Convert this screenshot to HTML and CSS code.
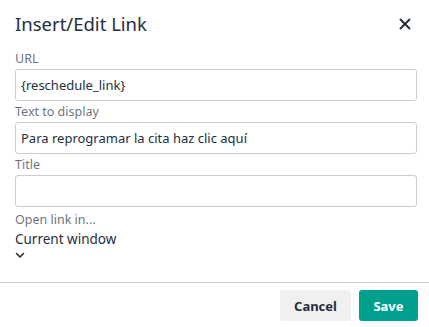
FILE: index.html
```html
<!DOCTYPE html>
<html lang="en">
<head>
    <meta charset="UTF-8">
    <title>Insert/Edit Link</title>
    <link rel="stylesheet" href="styles.css">
</head>
<body>
    <div class="dialog">
        <div class="dialog-header">
            <div class="dialog-title">Insert/Edit Link</div>
            <button class="close-btn" aria-label="Close">
                <svg width="12" height="12" viewBox="0 0 12 12">
                    <path d="M1.5 1.5 L10.5 10.5 M10.5 1.5 L1.5 10.5" stroke="#222f3e" stroke-width="2" stroke-linecap="round"/>
                </svg>
            </button>
        </div>
        <div class="dialog-body">
            <label class="field-label" for="url">URL</label>
            <input class="field-input" id="url" type="text" value="{reschedule_link}">

            <label class="field-label" for="text">Text to display</label>
            <input class="field-input" id="text" type="text" value="Para reprogramar la cita haz clic aquí">

            <label class="field-label" for="title">Title</label>
            <input class="field-input" id="title" type="text" value="">

            <div class="field-label spaced">Open link in...</div>
            <div class="select">
                <div class="select-value">Current window</div>
                <svg class="chevron" width="10" height="7" viewBox="0 0 10 7">
                    <path d="M1.5 1.5 L5 5 L8.5 1.5" fill="none" stroke="#222f3e" stroke-width="1.6" stroke-linecap="round" stroke-linejoin="round"/>
                </svg>
            </div>
        </div>
        <div class="dialog-footer">
            <button class="btn btn-cancel">Cancel</button>
            <button class="btn btn-save">Save</button>
        </div>
    </div>
</body>
</html>
```

FILE: styles.css
```css
body {
    margin: 0;
    background: #ffffff;
    font-family: "Noto Sans", sans-serif;
    color: #222f3e;
}
.dialog {
    width: 429px;
    height: 327px;
    display: flex;
    flex-direction: column;
}
.dialog-header {
    display: flex;
    justify-content: space-between;
    align-items: center;
    padding: 9px 16px 0 15px;
    height: 30px;
}
.dialog-title {
    font-size: 18.5px;
    line-height: 26px;
    color: #222f3e;
}
.close-btn {
    border: none;
    background: none;
    padding: 0;
    width: 16px;
    height: 16px;
    display: flex;
    align-items: center;
    justify-content: center;
}
.dialog-body {
    flex: 1;
    padding: 12px 13px 0 15px;
    display: flex;
    flex-direction: column;
}
.field-label {
    font-size: 12.5px;
    line-height: 16px;
    color: rgba(34, 47, 62, 0.7);
    margin-bottom: 2px;
}
.field-label.spaced {
    margin-top: 2px;
}
.field-input {
    font-family: "Noto Sans", sans-serif;
    font-size: 13px;
    color: #222f3e;
    height: 32px;
    box-sizing: border-box;
    border: 1px solid #cccccc;
    border-radius: 3px;
    padding: 0 5px;
    margin: 0 0 3px;
    width: 402px;
}
.select {
    display: flex;
    flex-direction: column;
}
.select-value {
    font-size: 13.5px;
    line-height: 18px;
    margin-top: 0;
}
.chevron {
    margin-top: 4px;
    margin-left: 0;
}
.dialog-footer {
    box-sizing: border-box;
    border-top: 1px solid #cccccc;
    display: flex;
    justify-content: flex-end;
    gap: 8px;
    padding: 7px 11px 0 0;
    height: 45px;
}
.btn {
    font-family: "Noto Sans", sans-serif;
    font-weight: 700;
    font-size: 13px;
    height: 31px;
    border: none;
    border-radius: 3px;
    padding: 0;
}
.btn-cancel {
    background: #f0f0f0;
    color: #222f3e;
    width: 71px;
}
.btn-save {
    background: #00a08e;
    color: #ffffff;
    width: 59px;
}
```
